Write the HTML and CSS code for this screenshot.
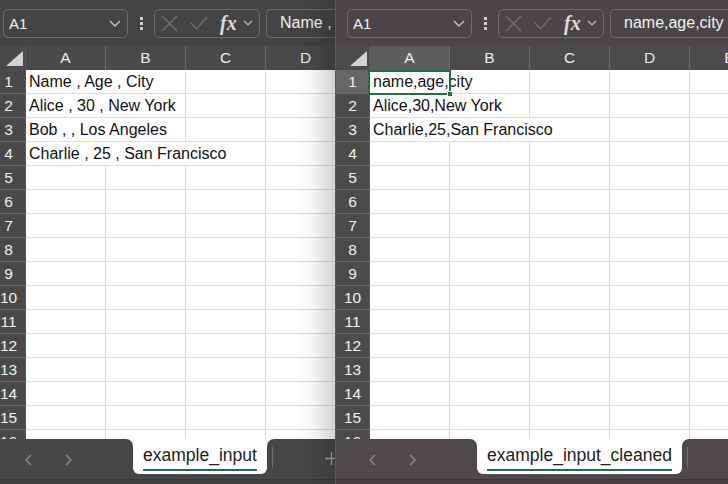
FILE: index.html
```html
<!DOCTYPE html>
<html lang="en">
<head>
<meta charset="utf-8">
<title>Excel windows</title>
<link rel="stylesheet" href="styles.css">
</head>
<body>
<div class="desk">
  <section class="win win-left">
    <div class="frame">
      <header class="toolbar">
        <div class="namebox"><span>A1</span><svg width="12" height="7" viewBox="0 0 12 7"><path d="M1 1l5 5 5-5" fill="none" stroke="#c8c8c8" stroke-width="1.3"/></svg></div>
        <div class="grip"><i></i><i></i><i></i></div>
        <div class="fxbox">
          <svg class="ix" width="17" height="17" viewBox="0 0 17 17"><path d="M1 1L16 16M16 1L1 16" stroke="#727272" stroke-width="1.3"/></svg>
          <svg class="ick" width="18" height="14" viewBox="0 0 18 14"><path d="M1 7l5.5 6L17 1" fill="none" stroke="#727272" stroke-width="1.3"/></svg>
          <span class="fx">fx</span>
          <svg class="ich" width="10" height="6" viewBox="0 0 10 6"><path d="M1 1l4 4 4-4" fill="none" stroke="#bdbdbd" stroke-width="1.2"/></svg>
        </div>
        <div class="formula">Name , Age , City</div>
      </header>
      <div class="sheet">
        <div class="row head"><div class="corner"><span class="tri"></span></div><div class="ch">A</div><div class="ch">B</div><div class="ch">C</div><div class="ch">D</div><div class="ch">E</div></div>
        <div class="row"><div class="rh">1</div><div class="c span2">Name , Age , City</div><div class="c"></div><div class="c"></div><div class="c"></div></div>
        <div class="row"><div class="rh">2</div><div class="c span2">Alice , 30 , New York</div><div class="c"></div><div class="c"></div><div class="c"></div></div>
        <div class="row"><div class="rh">3</div><div class="c span2">Bob , , Los Angeles</div><div class="c"></div><div class="c"></div><div class="c"></div></div>
        <div class="row"><div class="rh">4</div><div class="c span3">Charlie , 25 , San Francisco</div><div class="c"></div><div class="c"></div></div>
        <div class="row"><div class="rh">5</div><div class="c"></div><div class="c"></div><div class="c"></div><div class="c"></div><div class="c"></div></div>
        <div class="row"><div class="rh">6</div><div class="c"></div><div class="c"></div><div class="c"></div><div class="c"></div><div class="c"></div></div>
        <div class="row"><div class="rh">7</div><div class="c"></div><div class="c"></div><div class="c"></div><div class="c"></div><div class="c"></div></div>
        <div class="row"><div class="rh">8</div><div class="c"></div><div class="c"></div><div class="c"></div><div class="c"></div><div class="c"></div></div>
        <div class="row"><div class="rh">9</div><div class="c"></div><div class="c"></div><div class="c"></div><div class="c"></div><div class="c"></div></div>
        <div class="row"><div class="rh">10</div><div class="c"></div><div class="c"></div><div class="c"></div><div class="c"></div><div class="c"></div></div>
        <div class="row"><div class="rh">11</div><div class="c"></div><div class="c"></div><div class="c"></div><div class="c"></div><div class="c"></div></div>
        <div class="row"><div class="rh">12</div><div class="c"></div><div class="c"></div><div class="c"></div><div class="c"></div><div class="c"></div></div>
        <div class="row"><div class="rh">13</div><div class="c"></div><div class="c"></div><div class="c"></div><div class="c"></div><div class="c"></div></div>
        <div class="row"><div class="rh">14</div><div class="c"></div><div class="c"></div><div class="c"></div><div class="c"></div><div class="c"></div></div>
        <div class="row"><div class="rh">15</div><div class="c"></div><div class="c"></div><div class="c"></div><div class="c"></div><div class="c"></div></div>
        <div class="row"><div class="rh">16</div><div class="c"></div><div class="c"></div><div class="c"></div><div class="c"></div><div class="c"></div></div>
      </div>
      <footer class="tabbar">
        <div class="tb-left">
          <svg width="9" height="12" viewBox="0 0 9 12"><path d="M7 1L2 6l5 5" fill="none" stroke="#8c8c8c" stroke-width="1.4"/></svg>
          <svg width="9" height="12" viewBox="0 0 9 12"><path d="M2 1l5 5-5 5" fill="none" stroke="#8c8c8c" stroke-width="1.4"/></svg>
        </div>
        <div class="tabwrap"><div class="tab"><span>example_input</span></div></div>
        <div class="tb-right"><span class="sep"></span><svg class="plus" width="13" height="13" viewBox="0 0 13 13"><path d="M6.5 0v13M0 6.5h13" stroke="#a8a8a8" stroke-width="1.3"/></svg></div>
      </footer>
      <div class="status"></div>
    </div>
  </section>

  <section class="win win-right">
    <div class="frame">
      <header class="toolbar">
        <div class="namebox"><span>A1</span><svg width="12" height="7" viewBox="0 0 12 7"><path d="M1 1l5 5 5-5" fill="none" stroke="#c8c8c8" stroke-width="1.3"/></svg></div>
        <div class="grip"><i></i><i></i><i></i></div>
        <div class="fxbox">
          <svg class="ix" width="17" height="17" viewBox="0 0 17 17"><path d="M1 1L16 16M16 1L1 16" stroke="#727272" stroke-width="1.3"/></svg>
          <svg class="ick" width="18" height="14" viewBox="0 0 18 14"><path d="M1 7l5.5 6L17 1" fill="none" stroke="#727272" stroke-width="1.3"/></svg>
          <span class="fx">fx</span>
          <svg class="ich" width="10" height="6" viewBox="0 0 10 6"><path d="M1 1l4 4 4-4" fill="none" stroke="#bdbdbd" stroke-width="1.2"/></svg>
        </div>
        <div class="formula">name,age,city</div>
      </header>
      <div class="sheet">
        <div class="row head"><div class="corner"><span class="tri"></span></div><div class="ch sel">A</div><div class="ch">B</div><div class="ch">C</div><div class="ch">D</div><div class="ch">E</div></div>
        <div class="row"><div class="rh sel">1</div><div class="c span2">name,age,city</div><div class="c"></div><div class="c"></div><div class="c"></div></div>
        <div class="row"><div class="rh">2</div><div class="c span2">Alice,30,New York</div><div class="c"></div><div class="c"></div><div class="c"></div></div>
        <div class="row"><div class="rh">3</div><div class="c span3">Charlie,25,San Francisco</div><div class="c"></div><div class="c"></div></div>
        <div class="row"><div class="rh">4</div><div class="c"></div><div class="c"></div><div class="c"></div><div class="c"></div><div class="c"></div></div>
        <div class="row"><div class="rh">5</div><div class="c"></div><div class="c"></div><div class="c"></div><div class="c"></div><div class="c"></div></div>
        <div class="row"><div class="rh">6</div><div class="c"></div><div class="c"></div><div class="c"></div><div class="c"></div><div class="c"></div></div>
        <div class="row"><div class="rh">7</div><div class="c"></div><div class="c"></div><div class="c"></div><div class="c"></div><div class="c"></div></div>
        <div class="row"><div class="rh">8</div><div class="c"></div><div class="c"></div><div class="c"></div><div class="c"></div><div class="c"></div></div>
        <div class="row"><div class="rh">9</div><div class="c"></div><div class="c"></div><div class="c"></div><div class="c"></div><div class="c"></div></div>
        <div class="row"><div class="rh">10</div><div class="c"></div><div class="c"></div><div class="c"></div><div class="c"></div><div class="c"></div></div>
        <div class="row"><div class="rh">11</div><div class="c"></div><div class="c"></div><div class="c"></div><div class="c"></div><div class="c"></div></div>
        <div class="row"><div class="rh">12</div><div class="c"></div><div class="c"></div><div class="c"></div><div class="c"></div><div class="c"></div></div>
        <div class="row"><div class="rh">13</div><div class="c"></div><div class="c"></div><div class="c"></div><div class="c"></div><div class="c"></div></div>
        <div class="row"><div class="rh">14</div><div class="c"></div><div class="c"></div><div class="c"></div><div class="c"></div><div class="c"></div></div>
        <div class="row"><div class="rh">15</div><div class="c"></div><div class="c"></div><div class="c"></div><div class="c"></div><div class="c"></div></div>
        <div class="row"><div class="rh">16</div><div class="c"></div><div class="c"></div><div class="c"></div><div class="c"></div><div class="c"></div></div>
        <div class="selbox"><span class="handle"></span></div>
      </div>
      <footer class="tabbar">
        <div class="tb-left">
          <svg width="9" height="12" viewBox="0 0 9 12"><path d="M7 1L2 6l5 5" fill="none" stroke="#8c8c8c" stroke-width="1.4"/></svg>
          <svg width="9" height="12" viewBox="0 0 9 12"><path d="M2 1l5 5-5 5" fill="none" stroke="#8c8c8c" stroke-width="1.4"/></svg>
        </div>
        <div class="tabwrap"><div class="tab"><span>example_input_cleaned</span></div></div>
        <div class="tb-right"><span class="sep"></span></div>
      </footer>
      <div class="status"></div>
    </div>
  </section>
</div>
</body>
</html>
```

FILE: styles.css
```css
* { box-sizing: border-box; }
html, body { margin: 0; height: 100%; }
body {
  background: #3a3a3a;
  font-family: "Liberation Sans", Arial, sans-serif;
  overflow: hidden;
}
.desk { display: flex; width: 728px; height: 484px; }
.win { height: 484px; overflow: hidden; flex: none; }
.win-left {
  width: 335px;
  --tb: #444444; --bar: #474747; --hd: #494949; --st: #404040;
}
.win-left .frame { margin-left: -8px; width: 430px; }
.win-right {
  width: 393px;
  border-left: 1px solid #5c5c5c;
  position: relative;
  z-index: 1;
  box-shadow: -6px 0 34px rgba(0, 0, 0, 0.28);
  --tb: #4a4548; --bar: #4f494d; --hd: #4b4b4b; --st: #463f43;
}
.frame { display: flex; flex-direction: column; height: 484px; }

/* toolbar */
.toolbar {
  flex: none;
  height: 46px;
  display: flex;
  align-items: center;
  padding-left: 11px;
  background: var(--tb);
  color: #f2f2f2;
}
.namebox {
  width: 125px; height: 29px;
  border: 1px solid #6c6c6c;
  border-radius: 5px;
  display: flex; align-items: center; justify-content: space-between;
  padding: 0 6px 0 5px;
  font-size: 15px;
}
.grip {
  width: 26px;
  display: flex; flex-direction: column; align-items: center; gap: 2px;
}
.grip i { display: block; width: 3px; height: 3px; background: #cfcfcf; }
.fxbox {
  width: 106px; height: 29px;
  border: 1px solid #6c6c6c;
  border-radius: 5px;
  display: flex; align-items: center;
  padding-left: 6px;
}
.ix { flex: none; }
.ick { flex: none; margin-left: 12px; }
.fx {
  margin-left: 12px;
  font-family: "Liberation Serif", "DejaVu Serif", serif;
  font-style: italic; font-weight: bold;
  font-size: 20px; line-height: 20px;
  color: #dcdcdc;
}
.ich { margin-left: 6px; flex: none; }
.formula {
  flex: 1;
  margin-left: 6px;
  height: 29px;
  border: 1px solid #6c6c6c;
  border-right: none;
  border-radius: 5px 0 0 5px;
  display: flex; align-items: center;
  padding-left: 13px;
  font-size: 16px;
  white-space: nowrap;
  overflow: hidden;
}

/* sheet */
.sheet {
  flex: 1;
  overflow: hidden;
  background: #fff;
  position: relative;
}
.row {
  display: grid;
  grid-template-columns: 34px repeat(5, 80px);
  height: 24px;
}
.row.head { background: var(--hd); }
.corner {
  display: flex; justify-content: flex-end; align-items: flex-end;
  padding: 0 2px 4px 0;
  border-right: 1px solid #5a5a5a;
}
.tri {
  width: 17px; height: 15px;
  background: #d2d2d2;
  clip-path: polygon(100% 0, 100% 100%, 0 100%);
}
.ch {
  border-right: 1px solid #6c6c6c;
  color: #ececec;
  font-size: 15.5px;
  line-height: 24px;
  text-align: center;
}
.ch.sel { background: #5e5e5e; }
.rh {
  background: var(--hd);
  color: #f0f0f0;
  font-size: 15.5px;
  line-height: 23px;
  text-align: center;
  border-bottom: 1px solid #6a6a6a;
  border-right: 1px solid #5a5a5a;
}
.rh.sel { background: #666666; }
.c {
  border-right: 1px solid #dadada;
  border-bottom: 1px solid #dadada;
  font-size: 16px;
  line-height: 23px;
  padding-left: 3px;
  color: #111;
  white-space: nowrap;
}
.span2 { grid-column: span 2; }
.span3 { grid-column: span 3; }
.selbox {
  position: absolute;
  left: 32px; top: 24px;
  width: 83px; height: 25px;
  border: 2px solid #1e7145;
}
.handle {
  position: absolute;
  right: -4px; bottom: -4px;
  width: 6px; height: 6px;
  background: #1e7145;
  border: 1px solid #fff;
}

/* tab bar */
.tabbar {
  flex: none;
  height: 40px;
  display: flex;
  background: #fff;
}
.tb-left {
  width: 141px;
  background: var(--bar);
  border-top-right-radius: 7px;
  display: flex; align-items: center; gap: 31px;
  padding: 2px 0 0 32px;
}
.tabwrap { background: var(--bar); }
.tab {
  height: 35px;
  background: #fff;
  border-radius: 0 0 6px 6px;
  padding: 6px 10px 0;
}
.tab span {
  display: block;
  font-size: 17.5px;
  line-height: 20px;
  color: #222;
  padding-bottom: 4px;
  border-bottom: 2px solid #1e7145;
  white-space: nowrap;
}
.tb-right {
  flex: 1;
  background: var(--bar);
  border-top-left-radius: 7px;
  display: flex; align-items: flex-start;
}
.sep {
  display: block;
  width: 1px; height: 21px;
  margin: 8px 0 0 5px;
  background: #707070;
}
.plus { margin: 13px 0 0 52px; }
.status {
  flex: none;
  height: 5px;
  background: var(--st);
  border-top: 1px solid #383838;
}
```
